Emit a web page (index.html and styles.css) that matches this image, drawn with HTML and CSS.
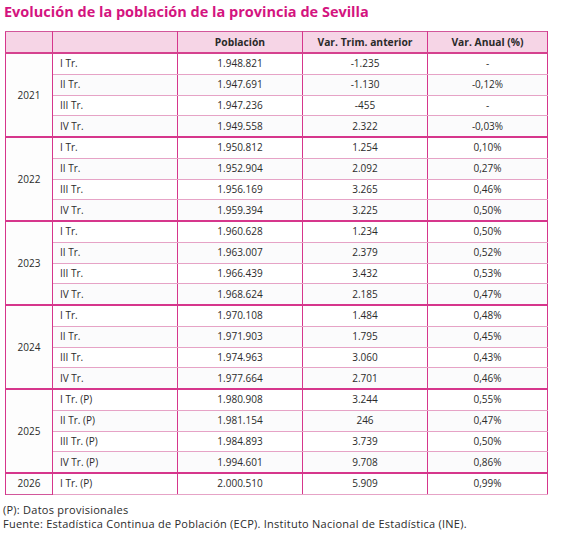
FILE: index.html
```html
<!DOCTYPE html>
<html lang="es">
<head>
<meta charset="utf-8">
<link rel="stylesheet" href="styles.css">
</head>
<body>
<h1 class="title">Evolución de la población de la provincia de Sevilla</h1>
<table class="tbl">
<thead>
<tr><th class="c1"></th><th class="c2"></th><th class="c3">Población</th><th class="c4">Var. Trim. anterior</th><th class="c5">Var. Anual (%)</th></tr>
</thead>
<tbody class="grp">
<tr><td class="yr" rowspan="4">2021</td><td class="lbl">I Tr.</td><td>1.948.821</td><td>-1.235</td><td>-</td></tr>
<tr class="alt"><td class="lbl">II Tr.</td><td>1.947.691</td><td>-1.130</td><td>-0,12%</td></tr>
<tr><td class="lbl">III Tr.</td><td>1.947.236</td><td>-455</td><td>-</td></tr>
<tr class="alt"><td class="lbl">IV Tr.</td><td>1.949.558</td><td>2.322</td><td>-0,03%</td></tr>
</tbody>
<tbody class="grp">
<tr><td class="yr" rowspan="4">2022</td><td class="lbl">I Tr.</td><td>1.950.812</td><td>1.254</td><td>0,10%</td></tr>
<tr class="alt"><td class="lbl">II Tr.</td><td>1.952.904</td><td>2.092</td><td>0,27%</td></tr>
<tr><td class="lbl">III Tr.</td><td>1.956.169</td><td>3.265</td><td>0,46%</td></tr>
<tr class="alt"><td class="lbl">IV Tr.</td><td>1.959.394</td><td>3.225</td><td>0,50%</td></tr>
</tbody>
<tbody class="grp">
<tr><td class="yr" rowspan="4">2023</td><td class="lbl">I Tr.</td><td>1.960.628</td><td>1.234</td><td>0,50%</td></tr>
<tr class="alt"><td class="lbl">II Tr.</td><td>1.963.007</td><td>2.379</td><td>0,52%</td></tr>
<tr><td class="lbl">III Tr.</td><td>1.966.439</td><td>3.432</td><td>0,53%</td></tr>
<tr class="alt"><td class="lbl">IV Tr.</td><td>1.968.624</td><td>2.185</td><td>0,47%</td></tr>
</tbody>
<tbody class="grp">
<tr><td class="yr" rowspan="4">2024</td><td class="lbl">I Tr.</td><td>1.970.108</td><td>1.484</td><td>0,48%</td></tr>
<tr class="alt"><td class="lbl">II Tr.</td><td>1.971.903</td><td>1.795</td><td>0,45%</td></tr>
<tr><td class="lbl">III Tr.</td><td>1.974.963</td><td>3.060</td><td>0,43%</td></tr>
<tr class="alt"><td class="lbl">IV Tr.</td><td>1.977.664</td><td>2.701</td><td>0,46%</td></tr>
</tbody>
<tbody class="grp">
<tr><td class="yr" rowspan="4">2025</td><td class="lbl">I Tr. (P)</td><td>1.980.908</td><td>3.244</td><td>0,55%</td></tr>
<tr class="alt"><td class="lbl">II Tr. (P)</td><td>1.981.154</td><td>246</td><td>0,47%</td></tr>
<tr><td class="lbl">III Tr. (P)</td><td>1.984.893</td><td>3.739</td><td>0,50%</td></tr>
<tr class="alt"><td class="lbl">IV Tr. (P)</td><td>1.994.601</td><td>9.708</td><td>0,86%</td></tr>
</tbody>
<tbody class="grp">
<tr><td class="yr">2026</td><td class="lbl">I Tr. (P)</td><td>2.000.510</td><td>5.909</td><td>0,99%</td></tr>
</tbody>
</table>
<div class="notes">
<p>(P): Datos provisionales</p>
<p>Fuente: Estadística Continua de Población (ECP). Instituto Nacional de Estadística (INE).</p>
</div>
</body>
</html>
```
FILE: styles.css
```css
html, body { margin: 0; padding: 0; background: #ffffff; }
body {
  font-family: "Open Sans", "Liberation Sans", sans-serif;
  color: #2b2b2b;
  padding: 0 0 0 5px;
}
.title {
  margin: 0 0 0 -1px;
  padding-top: 3px;
  height: 31px;
  box-sizing: border-box;
  font-family: "Open Sans", sans-serif;
  font-weight: 700;
  font-size: 14.5px;
  line-height: 18px;
  color: #d4147f;
}
.tbl {
  border-collapse: collapse;
  width: 541px;
  table-layout: fixed;
  font-size: 10px;
  border: 1.5px solid #d2569a;
}
.tbl th, .tbl td {
  height: 19.75px;
  padding: 0;
  text-align: center;
  border-left: 1.5px solid #d6368c;
  border-right: 1.5px solid #d6368c;
  line-height: 19px;
  white-space: nowrap;
}
.tbl thead th {
  background: #f6d5e6;
  font-weight: 700;
  font-size: 10.3px;
  height: 20px;
  border-top: 1.5px solid #d2569a;
  border-bottom: 2px solid #d5428f;
  color: #2a2a2a;
}
.c1 { width: 46px; }
.c2 { width: 124px; }
.c3 { width: 124px; }
.c4 { width: 124px; }
.c5 { width: 119px; }
.tbl tbody tr td { border-bottom: 1px solid #e6a3c6; background: #ffffff; }
.tbl tbody tr.alt td { background: #fbfbfc; }
.tbl tbody.grp { border-top: 2px solid #d6368c; }
.tbl td.yr { background: #fdfdfd; border-bottom: none; }
.tbl td.lbl { text-align: left; padding-left: 7px; }
.notes { padding-top: 8px; font-size: 11px; letter-spacing: 0.25px; margin-left: -2px; }
.notes p { margin: 0; line-height: 14px; }
```
